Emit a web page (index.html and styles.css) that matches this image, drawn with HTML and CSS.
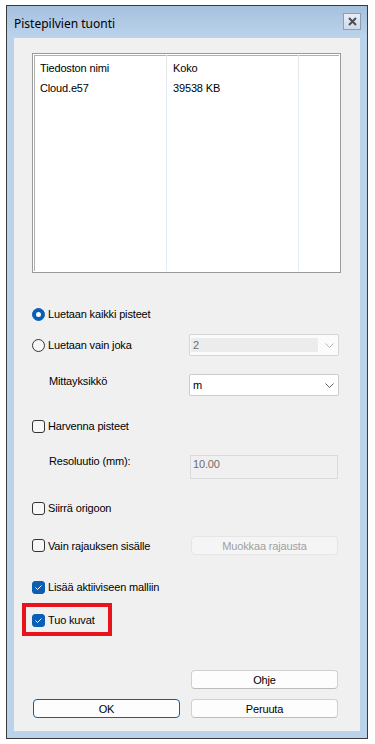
FILE: index.html
```html
<!DOCTYPE html>
<html lang="fi">
<head>
<meta charset="utf-8">
<title>Pistepilvien tuonti</title>
<link rel="stylesheet" href="styles.css">
</head>
<body>
<div class="window">
  <div class="titlebar">
    <span class="title">Pistepilvien tuonti</span>
    <span class="close">
      <svg width="9" height="9" viewBox="0 0 9 9"><path d="M1 1 L8 8 M8 1 L1 8" stroke="#4b4f55" stroke-width="2" fill="none"/></svg>
    </span>
  </div>
  <div class="client">
    <div class="listview">
      <div class="lv-grid">
        <div class="hcell">Tiedoston nimi</div>
        <div class="hcell">Koko</div>
        <div class="hcell last"></div>
        <div class="cell">Cloud.e57</div>
        <div class="cell">39538 KB</div>
        <div class="cell last"></div>
        <div class="cell"></div>
        <div class="cell"></div>
        <div class="cell last"></div>
      </div>
    </div>

    <div class="row row-a">
      <span class="radio on"></span><span class="label">Luetaan kaikki pisteet</span>
    </div>

    <div class="row row-b">
      <div class="lead"><span class="radio"></span><span class="label">Luetaan vain joka</span></div>
      <div class="combo disabled">
        <span class="field">2</span>
        <svg class="chev" width="9" height="5" viewBox="0 0 9 5"><path d="M0.5 0.5 L4.5 4.5 L8.5 0.5" stroke="#b8b8b8" fill="none"/></svg>
      </div>
    </div>

    <div class="row row-c">
      <div class="lead"><span class="sublabel">Mittayksikkö</span></div>
      <div class="combo">
        <span class="field">m</span>
        <svg class="chev" width="9" height="5" viewBox="0 0 9 5"><path d="M0.5 0.5 L4.5 4.5 L8.5 0.5" stroke="#5f5f5f" fill="none"/></svg>
      </div>
    </div>

    <div class="row row-d">
      <span class="check"></span><span class="label">Harvenna pisteet</span>
    </div>

    <div class="row row-e">
      <div class="lead"><span class="sublabel">Resoluutio (mm):</span></div>
      <div class="textbox">10.00</div>
    </div>

    <div class="row row-f">
      <span class="check"></span><span class="label">Siirrä origoon</span>
    </div>

    <div class="row row-g">
      <div class="lead"><span class="check"></span><span class="label">Vain rajauksen sisälle</span></div>
      <div class="btn disabled">Muokkaa rajausta</div>
    </div>

    <div class="row row-h">
      <span class="check on"><svg width="11" height="11" viewBox="0 0 11 11"><path d="M2.5 5.5 L4.5 7.5 L8.5 3.5" stroke="#fff" stroke-width="1" fill="none"/></svg></span><span class="label">Lisää aktiiviseen malliin</span>
    </div>

    <div class="row row-i">
      <span class="check on"><svg width="11" height="11" viewBox="0 0 11 11"><path d="M2.5 5.5 L4.5 7.5 L8.5 3.5" stroke="#fff" stroke-width="1" fill="none"/></svg></span><span class="label">Tuo kuvat</span>
      <span class="annot"></span>
    </div>

    <div class="row row-j">
      <div class="lead"></div>
      <div class="btn">Ohje</div>
    </div>

    <div class="row row-k">
      <div class="btn ok">OK</div>
      <div class="btn cancel">Peruuta</div>
    </div>
  </div>
</div>
</body>
</html>
```

FILE: styles.css
```css
* { box-sizing: border-box; }

body {
  margin: 0;
  background: #ffffff;
  font-family: "Liberation Sans", Arial, sans-serif;
  font-size: 11px;
  letter-spacing: -0.15px;
  color: #000;
}

.window {
  margin: 5px 0 0 6px;
  width: 362px;
  height: 734px;
  border: 1px solid #3a3a3a;
  background: #bad2ea;
  display: flex;
  flex-direction: column;
}

.titlebar {
  height: 32px;
  display: flex;
  align-items: flex-start;
  padding: 0 6px 0 7px;
  background: linear-gradient(#a6c1de, #bcd3eb);
}

.title {
  margin-top: 10px;
  font-family: "Noto Sans", "Open Sans", sans-serif;
  font-size: 12px;
  letter-spacing: 0;
  line-height: 16px;
  color: #000;
}

.close {
  margin-left: auto;
  margin-top: 7px;
  width: 18px;
  height: 17px;
  border: 1px solid #8d9db3;
  background: linear-gradient(#e9eef5, #cfdbea);
  display: flex;
  align-items: center;
  justify-content: center;
}

.client {
  margin: 0 7px 7px 7px;
  flex: 1;
  background: #f0f0f0;
  padding: 15px 0 0 18px;
}

.listview {
  width: 309px;
  height: 220px;
  border: 1px solid #9a9a9a;
  box-shadow: inset 0 0 0 1px #ffffff, inset 1px 1px 0 1px #b0b0b0;
  background: #fff;
  padding: 1px;
}

.lv-grid {
  height: 100%;
  display: grid;
  grid-template-columns: 133px 132px 1fr;
  grid-template-rows: 25px 18px 1fr;
}

.hcell {
  border-right: 1px solid #e5e5e5;
  padding: 7px 0 0 6px;
  line-height: 13px;
}

.cell {
  border-right: 1px solid #e3ecf6;
  padding: 2px 0 0 6px;
  line-height: 13px;
}

.hcell.last, .cell.last { border-right: none; }

.row {
  position: relative;
  display: flex;
  align-items: center;
  height: 20px;
}

.lead {
  width: 157px;
  height: 100%;
  display: flex;
  align-items: center;
  flex: none;
}

.label { margin-left: 3px; }

.row-a { margin-top: 31px; }
.row-b { margin-top: 10px; height: 22px; }
.row-c { margin-top: 18px; height: 22px; }
.row-d { margin-top: 20px; }
.row-e { margin-top: 19px; height: 24px; }
.row-f { margin-top: 19px; }
.row-g { margin-top: 18px; height: 19px; }
.row-h { margin-top: 22px; }
.row-i { margin-top: 13px; }
.row-j { margin-top: 40px; height: 19px; }
.row-k { margin-top: 10px; height: 19px; }

.row-c .lead, .row-e .lead { align-items: flex-start; }

.sublabel {
  padding-left: 17px;
  line-height: 14px;
}

.row-e .sublabel { line-height: 12px; }

.radio {
  width: 13px;
  height: 13px;
  flex: none;
  border-radius: 50%;
  border: 1px solid #333;
  background: #f7f7f7;
  position: relative;
}

.radio.on {
  background: #0a5fb4;
  border-color: #0a5fb4;
}

.radio.on::after {
  content: "";
  position: absolute;
  left: 3px;
  top: 3px;
  width: 5px;
  height: 5px;
  border-radius: 50%;
  background: #fff;
}

.check {
  width: 13px;
  height: 13px;
  flex: none;
  border-radius: 3px;
  border: 1px solid #333;
  background: #f7f7f7;
  display: flex;
  align-items: center;
  justify-content: center;
}

.check.on {
  background: #0a5fb4;
  border-color: #0a5fb4;
}

.combo {
  width: 150px;
  height: 22px;
  border: 1px solid #cccccc;
  border-radius: 2px;
  background: #fff;
  display: flex;
  align-items: center;
  padding: 0 4px 0 3px;
}

.combo .field { flex: 1; }

.combo.disabled {
  background: #fbfbfb;
  border-color: #d6d6d6;
  padding-left: 1px;
}

.combo.disabled .field {
  flex: none;
  width: 127px;
  height: 14px;
  line-height: 14px;
  background: #ececec;
  color: #6d6d6d;
  padding-left: 2px;
  margin-right: auto;
}

.chev { flex: none; }

.textbox {
  margin-left: 1px;
  width: 148px;
  height: 24px;
  border: 1px solid #dadada;
  background: #f0f0f0;
  color: #6d6d6d;
  padding: 1px 0 0 2px;
  line-height: 14px;
}

.btn {
  margin-left: 2px;
  width: 147px;
  height: 19px;
  border: 1px solid #d0d0d0;
  border-bottom-color: #bcbcbc;
  border-radius: 4px;
  background: #fdfdfd;
  display: flex;
  align-items: center;
  justify-content: center;
  flex: none;
}

.btn.disabled {
  background: #f5f5f5;
  border-color: #e5e5e5;
  color: #a0a0a0;
}

.btn.ok {
  margin-left: 1px;
  width: 147px;
  border-color: #0a5fb4;
}

.btn.cancel { margin-left: 11px; }

.annot {
  position: absolute;
  left: -10px;
  top: -7px;
  width: 90px;
  height: 33px;
  border: 4px solid #e8141c;
}
```
